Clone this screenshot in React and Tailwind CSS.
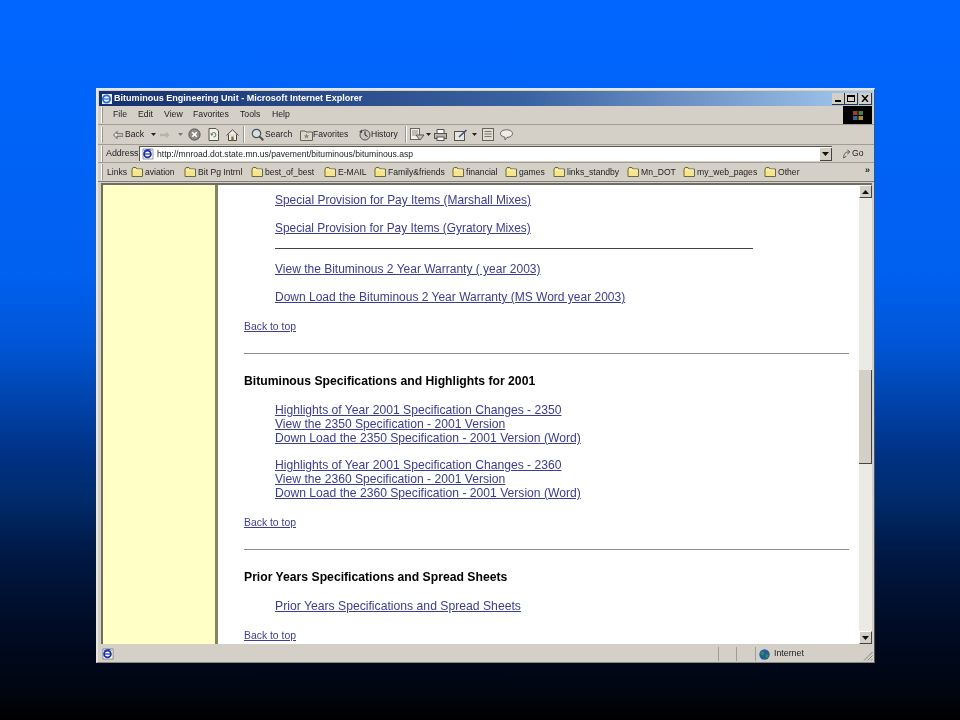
import React from 'react';

const folders = [
  { name: 'aviation', w: 'w-[53px]' },
  { name: 'Bit Pg Intrnl', w: 'w-[67px]' },
  { name: 'best_of_best', w: 'w-[73px]' },
  { name: 'E-MAIL', w: 'w-[50px]' },
  { name: 'Family&friends', w: 'w-[78px]' },
  { name: 'financial', w: 'w-[53px]' },
  { name: 'games', w: 'w-[48px]' },
  { name: 'links_standby', w: 'w-[74px]' },
  { name: 'Mn_DOT', w: 'w-[56px]' },
  { name: 'my_web_pages', w: 'w-[81px]' },
  { name: 'Other', w: 'w-[50px]' },
];

const FolderIcon = () => (
  <svg width="13" height="12" viewBox="0 0 13 12" className="shrink-0">
    <path d="M1 3 L2 1.5 H5 L6 3 H11.5 V10.5 H1 Z" fill="#f6e58a" stroke="#6b6a3c" strokeWidth="1" />
    <path d="M2 4 H10.5" stroke="#fff8c8" strokeWidth="1" />
  </svg>
);

const IeIcon = ({ size = 12 }) => (
  <svg width={size} height={size} viewBox="0 0 12 12" className="shrink-0">
    <rect x="1" y="1" width="10" height="10" fill="#fff" stroke="#555" strokeWidth="0.6" />
    <circle cx="5.5" cy="6" r="3.4" fill="none" stroke="#1c2fa8" strokeWidth="1.8" />
    <path d="M2.5 6 H8.5" stroke="#1c2fa8" strokeWidth="1.2" />
    <path d="M2 3 C4 1 8 1 9.5 2.5" stroke="#1c2fa8" strokeWidth="0.8" fill="none" />
  </svg>
);

const Caret = ({ className = '' }) => (
  <svg width="5" height="3" viewBox="0 0 5 3" className={`shrink-0 ${className}`}>
    <path d="M0 0 H5 L2.5 3 Z" fill="#222" />
  </svg>
);

const GroupBar = () => <div className="w-[2px] h-[16px] shrink-0 border-l border-r border-l-white border-r-[#9a978e]" />;
const Sep = ({ className = '' }) => <div className={`w-[2px] h-[17px] shrink-0 border-l border-r border-l-[#9a978e] border-r-white ${className}`} />;

const NavLink = ({ children, size = 'text-[12px]' }) => (
  <a className={`block h-[14px] leading-[12px] text-[#3b3b98] underline whitespace-nowrap ${size}`}>{children}</a>
);

const BackToTop = ({ className = '' }) => (
  <a className={`block h-[14px] leading-[14px] text-[10.4px] text-[#3b3b98] underline ${className}`}>Back to top</a>
);

const Heading = ({ children, className = '' }) => (
  <div className={`h-[14px] leading-[12px] text-[12.2px] font-bold text-black ${className}`}>{children}</div>
);

const Rule = ({ className = '' }) => <div className={`h-[1px] bg-[#8c8c8c] ${className}`} />;

const ScrollButton = ({ up }) => (
  <div className="h-[13px] w-[13px] bg-[#d4d0c8] border-t border-l border-t-white border-l-white border-b border-r border-b-[#444] border-r-[#444] flex items-center justify-center">
    <svg width="7" height="4" viewBox="0 0 7 4">
      <path d={up ? 'M3.5 0 L7 4 H0 Z' : 'M0 0 H7 L3.5 4 Z'} fill="#111" />
    </svg>
  </div>
);

export default function App() {
  return (
    <div
      className="w-[960px] h-[720px] overflow-hidden pt-[88px] pl-[96px] bg-[linear-gradient(to_bottom,#0066ff_0%,#0060f0_38%,#0055d5_48%,#0040a5_57%,#003080_64%,#002a68_70%,#001a48_76%,#001030_83%,#000a20_89%,#000510_96%,#000_100%)]"
      style={{ fontFamily: '"Liberation Sans", Arial, sans-serif' }}
    >
      <div className="w-[779px] h-[575px] bg-[#d4d0c8] flex flex-col border-t-2 border-l-2 border-t-[#e8e6e0] border-l-[#e8e6e0] border-r border-b border-r-[#55534e] border-b-[#8a8880] blur-[0.35px]">
        {/* title bar */}
        <div className="mx-[1px] mt-[1px] h-[15px] flex items-center shrink-0 pl-[1px] pr-[1px] bg-[linear-gradient(to_right,#16306f,#3a62a0_55%,#a6caf0)]">
          <svg width="13" height="13" viewBox="0 0 13 13" className="shrink-0">
            <rect x="2" y="2" width="10" height="10" fill="#e8f0ff" />
            <circle cx="6.5" cy="7" r="3.6" fill="none" stroke="#2a6fd0" strokeWidth="1.8" />
            <path d="M3 7 H10" stroke="#2a6fd0" strokeWidth="1.2" />
          </svg>
          <span className="ml-[1px] text-[9.05px] font-bold text-white whitespace-nowrap">Bituminous Engineering Unit - Microsoft Internet Explorer</span>
          <div className="ml-auto flex">
            <div className="w-[13px] h-[12px] bg-[#d4d0c8] border-b border-r border-b-[#333] border-r-[#333] flex items-end pl-[3px] pb-[2px]"><div className="w-[6px] h-[2px] bg-black" /></div>
            <div className="w-[13px] h-[12px] bg-[#d4d0c8] border-b border-r border-b-[#333] border-r-[#333] flex items-center justify-center"><div className="w-[8px] h-[7px] border border-t-2 border-black" /></div>
            <div className="w-[13px] h-[12px] ml-[1px] bg-[#d4d0c8] border-b border-r border-b-[#333] border-r-[#333] flex items-center justify-center">
              <svg width="8" height="7" viewBox="0 0 8 7"><path d="M1 0 L7 7 M7 0 L1 7" stroke="#000" strokeWidth="1.4" /></svg>
            </div>
          </div>
        </div>

        {/* menu bar */}
        <div className="h-[19px] shrink-0 flex items-center pl-[3px] border-b border-b-[#a09d94] text-[8.7px] text-[#222]">
          <GroupBar />
          <span className="ml-[10px] w-[25px]">File</span>
          <span className="w-[26px]">Edit</span>
          <span className="w-[29px]">View</span>
          <span className="w-[47px]">Favorites</span>
          <span className="w-[32px]">Tools</span>
          <span>Help</span>
          <div className="ml-auto mr-[2px] w-[29px] h-[18px] bg-black flex items-center justify-center">
            <svg width="12" height="11" viewBox="0 0 12 11">
              <rect x="1" y="1" width="4.5" height="4" fill="#9c3f34" />
              <rect x="6.5" y="1" width="4.5" height="4" fill="#4f8240" />
              <rect x="1" y="6" width="4.5" height="4" fill="#3f5f98" />
              <rect x="6.5" y="6" width="4.5" height="4" fill="#a88d34" />
            </svg>
          </div>
        </div>

        {/* standard buttons */}
        <div className="h-[20px] shrink-0 flex items-center pl-[3px] border-b border-b-[#a09d94] text-[8.6px] text-[#222]">
          <GroupBar />
          <svg width="10" height="8" viewBox="0 0 10 8" className="ml-[10px] shrink-0"><path d="M4 0.5 L0.5 4 L4 7.5 V5.2 H10 V2.8 H4 Z" fill="#e9e6d8" stroke="#444" strokeWidth="0.8" /></svg>
          <span className="ml-[2px] w-[26px]">Back</span>
          <Caret />
          <svg width="10" height="8" viewBox="0 0 10 8" className="ml-[4px] shrink-0"><path d="M6 0.5 L9.5 4 L6 7.5 V5.2 H0 V2.8 H6 Z" fill="#b5b2a8" /></svg>
          <Caret className="ml-[8px] opacity-50" />
          <svg width="13" height="13" viewBox="0 0 13 13" className="ml-[5px] shrink-0">
            <circle cx="6.5" cy="6.5" r="5.6" fill="#8f8d88" stroke="#55534e" />
            <path d="M4.2 4.2 L8.8 8.8 M8.8 4.2 L4.2 8.8" stroke="#fff" strokeWidth="1.6" />
          </svg>
          <svg width="11" height="13" viewBox="0 0 11 13" className="ml-[7px] shrink-0">
            <path d="M1 0.5 H8 L10.5 3 V12.5 H1 Z" fill="#f3f1ea" stroke="#55534e" />
            <path d="M3.5 7 A2.2 2.2 0 1 1 5.5 9 M3 5.5 L3.5 7.2 L5 6.5" fill="none" stroke="#4d7a4a" />
          </svg>
          <svg width="13" height="12" viewBox="0 0 13 12" className="ml-[7px] shrink-0">
            <path d="M0.5 6.5 L6.5 0.8 L12.5 6.5 M2.5 5.5 V11.5 H10.5 V5.5" fill="#f0eee6" stroke="#444" />
            <rect x="5.3" y="7.5" width="2.4" height="4" fill="#8a6a3c" />
          </svg>
          <Sep className="ml-[4px]" />
          <svg width="13" height="13" viewBox="0 0 13 13" className="ml-[6px] shrink-0">
            <circle cx="5.5" cy="5.5" r="4.2" fill="#cfe0e8" stroke="#55534e" strokeWidth="1.2" />
            <path d="M8.5 8.5 L12.3 12.3" stroke="#55534e" strokeWidth="2" />
          </svg>
          <span className="ml-[1px] w-[35px]">Search</span>
          <svg width="13" height="12" viewBox="0 0 13 12" className="shrink-0">
            <path d="M0.5 2 H5 L6 3 H12.5 V11.5 H0.5 Z" fill="#dcd8c8" stroke="#66645c" />
            <path d="M6.5 4.5 L7.3 6.3 L9.2 6.5 L7.8 7.7 L8.2 9.5 L6.5 8.6 L4.8 9.5 L5.2 7.7 L3.8 6.5 L5.7 6.3 Z" fill="#8b8980" />
          </svg>
          <span className="w-[46px]">Favorites</span>
          <svg width="12" height="12" viewBox="0 0 12 12" className="shrink-0">
            <circle cx="6" cy="6" r="5" fill="#c8c6bf" stroke="#55534e" />
            <path d="M6 2.5 V6 L8.5 7.5" fill="none" stroke="#222" />
            <path d="M0 3 L3 0.5 L3 4 Z" fill="#444" />
          </svg>
          <span className="w-[34px]">History</span>
          <Sep />
          <svg width="15" height="13" viewBox="0 0 15 13" className="ml-[3px] shrink-0">
            <rect x="0.5" y="0.5" width="9" height="11" fill="#f2f0e8" stroke="#66645c" />
            <path d="M2 3 H8 M2 5 H8 M2 7 H6" stroke="#8b8980" />
            <path d="M6 7 H14 L10 12 Z" fill="#c9c6bb" stroke="#55534e" />
          </svg>
          <Caret className="ml-[1px]" />
          <svg width="13" height="12" viewBox="0 0 13 12" className="ml-[3px] shrink-0">
            <path d="M3 4.5 V0.5 H10 V4.5" fill="#fff" stroke="#55534e" />
            <rect x="0.5" y="4.5" width="12" height="5" fill="#b9b6ac" stroke="#55534e" />
            <rect x="3" y="8" width="7" height="3.5" fill="#fff" stroke="#55534e" />
          </svg>
          <svg width="14" height="12" viewBox="0 0 14 12" className="ml-[7px] shrink-0">
            <rect x="0.5" y="2.5" width="10" height="9" fill="#e8e6de" stroke="#55534e" />
            <path d="M5 8 L12.5 1" stroke="#3f4f86" strokeWidth="1.6" />
          </svg>
          <Caret className="ml-[4px]" />
          <svg width="13" height="13" viewBox="0 0 13 13" className="ml-[5px] shrink-0">
            <rect x="0.5" y="0.5" width="11" height="12" fill="#dedcd3" stroke="#66645c" />
            <path d="M2.5 3.5 H9.5 M2.5 6 H9.5 M2.5 8.5 H9.5" stroke="#77756c" />
          </svg>
          <svg width="13" height="12" viewBox="0 0 13 12" className="ml-[5px] shrink-0">
            <path d="M6.5 0.8 C10 0.8 12.5 2.4 12.5 4.6 C12.5 6.8 10 8.4 7 8.4 L5 11 V8.2 C2.4 7.8 0.5 6.4 0.5 4.6 C0.5 2.4 3 0.8 6.5 0.8 Z" fill="#eeece6" stroke="#66645c" />
          </svg>
        </div>

        {/* address bar */}
        <div className="h-[18px] shrink-0 flex items-center pl-[3px] border-b border-b-[#a09d94] text-[8.9px] text-[#222]">
          <GroupBar />
          <span className="ml-[3px] w-[32px]">Address</span>
          <div className="ml-[1px] w-[693px] h-[15px] bg-white border-t border-l border-t-[#55534e] border-l-[#55534e] flex items-center pl-[2px]">
            <IeIcon />
            <span className="ml-[3px] text-[8.6px] whitespace-nowrap">http://mnroad.dot.state.mn.us/pavement/bituminous/bituminous.asp</span>
            <div className="ml-auto w-[12px] h-[13px] bg-[#d4d0c8] border-b border-r border-b-[#444] border-r-[#444] flex items-center justify-center">
              <svg width="7" height="4" viewBox="0 0 7 4"><path d="M0 0 H7 L3.5 4 Z" fill="#111" /></svg>
            </div>
          </div>
          <svg width="10" height="12" viewBox="0 0 12 12" className="ml-[10px] shrink-0">
            <path d="M2 11 C2 6 4 3.5 8 3.5 M6.5 1 L9.5 3.5 L6.5 6 M2.5 11 L5 8.5" fill="none" stroke="#55534e" strokeWidth="1.2" />
          </svg>
          <span className="text-[8.6px]">Go</span>
        </div>

        {/* links bar */}
        <div className="h-[19px] shrink-0 flex items-center pl-[3px] border-b border-b-[#807e76] text-[8.6px] text-[#222]">
          <GroupBar />
          <span className="ml-[4px] w-[24px]">Links</span>
          {folders.map((f) => (
            <div key={f.name} className={`flex items-center gap-[1px] shrink-0 whitespace-nowrap ${f.w}`}>
              <FolderIcon />
              <span>{f.name}</span>
            </div>
          ))}
          <span className="ml-auto mr-[4px] font-bold text-[9px] leading-none mb-[4px]">»</span>
        </div>

        {/* page area */}
        <div className="flex-1 min-h-0 flex mt-[1px] ml-[3px] mr-[2px] border-t-2 border-l-2 border-t-[#6f6d66] border-l-[#6f6d66] overflow-hidden">
          <div className="w-[112px] shrink-0 bg-[#ffffc6] border-r-[3px] border-r-[#85855c] box-content" />
          <div className="flex-1 min-w-0 bg-white pl-[26px] pr-[10px] pt-[9px]">
            <div className="pl-[31px]">
              <NavLink size="text-[11.95px]">Special Provision for Pay Items (Marshall Mixes)</NavLink>
              <div className="mt-[14px]"><NavLink size="text-[11.9px]">Special Provision for Pay Items (Gyratory Mixes)</NavLink></div>
              <Rule className="w-[478px] mt-[12px] bg-[#444]" />
              <div className="mt-[14px]"><NavLink>View the Bituminous 2 Year Warranty ( year 2003)</NavLink></div>
              <div className="mt-[14px]"><NavLink>Down Load the Bituminous 2 Year Warranty (MS Word year 2003)</NavLink></div>
            </div>
            <BackToTop className="mt-[15px]" />
            <Rule className="mt-[19px]" />
            <Heading className="mt-[21px]">Bituminous Specifications and Highlights for 2001</Heading>
            <div className="pl-[31px] mt-[15px]">
              <NavLink size="text-[12.13px]">Highlights of Year 2001 Specification Changes - 2350</NavLink>
              <NavLink size="text-[12.13px]">View the 2350 Specification - 2001 Version</NavLink>
              <NavLink size="text-[12.13px]">Down Load the 2350 Specification - 2001 Version (Word)</NavLink>
              <div className="mt-[13px]"><NavLink size="text-[12.13px]">Highlights of Year 2001 Specification Changes - 2360</NavLink></div>
              <NavLink size="text-[12.13px]">View the 2360 Specification - 2001 Version</NavLink>
              <NavLink size="text-[12.13px]">Down Load the 2360 Specification - 2001 Version (Word)</NavLink>
            </div>
            <BackToTop className="mt-[15px]" />
            <Rule className="mt-[19px]" />
            <Heading className="mt-[21px]">Prior Years Specifications and Spread Sheets</Heading>
            <div className="pl-[31px] mt-[15px]">
              <NavLink size="text-[12.2px]">Prior Years Specifications and Spread Sheets</NavLink>
            </div>
            <BackToTop className="mt-[15px]" />
          </div>
          <div className="w-[13px] shrink-0 bg-[#eceae5] flex flex-col">
            <ScrollButton up />
            <div className="flex-1 flex flex-col pt-[172px]">
              <div className="h-[94px] bg-[#d4d0c8] border-b border-r border-b-[#444] border-r-[#444]" />
            </div>
            <ScrollButton />
          </div>
        </div>

        {/* status bar */}
        <div className="h-[17px] shrink-0 flex items-center pl-[4px] pt-[3px] text-[8.8px] text-[#222] mb-[1px]">
          <IeIcon />
          <div className="ml-auto w-[1px] h-[14px] bg-[#a09d94]" />
          <div className="ml-[17px] w-[1px] h-[14px] bg-[#a09d94]" />
          <div className="ml-[18px] w-[1px] h-[14px] bg-[#a09d94]" />
          <svg width="11" height="11" viewBox="0 0 11 11" className="ml-[3px] shrink-0">
            <circle cx="5.5" cy="5.5" r="5.2" fill="#1f5f9f" />
            <path d="M2 3 C4 1.5 6 3 5 5 C4 7 2.5 6 1.5 5 Z M7 5.5 C8.5 5 10 6 9 8 C8 10 6.5 9 6.5 7.5 Z" fill="#3f8a4a" />
          </svg>
          <span className="ml-[4px] w-[89px]">Internet</span>
          <svg width="10" height="10" viewBox="0 0 10 10" className="mr-[1px] mt-[3px] shrink-0">
            <path d="M9.5 1 L1 9.5 M9.5 4.5 L4.5 9.5 M9.5 8 L8 9.5" stroke="#85837b" strokeWidth="1" />
          </svg>
        </div>
      </div>
    </div>
  );
}
